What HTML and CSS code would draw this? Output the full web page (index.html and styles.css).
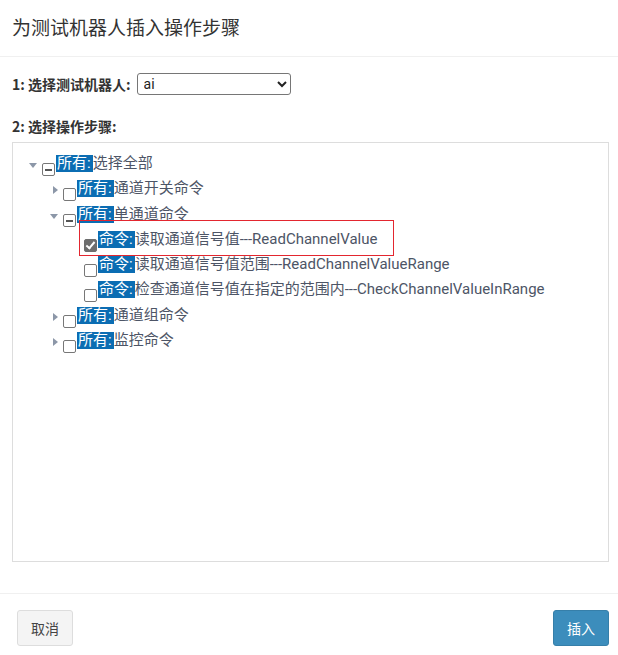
FILE: index.html
```html
<!DOCTYPE html>
<html lang="zh-CN">

<head>
    <meta charset="UTF-8">
    <meta name="viewport" content="width=device-width, initial-scale=1.0">
    <title>为测试机器人插入操作步骤</title>
    <link rel="stylesheet" href="styles.css">
</head>

<body>
    <div class="modal">
        <!-- Header -->
        <div class="modal-header">
            <h4 class="modal-title">为测试机器人插入操作步骤</h4>
        </div>

        <!-- Body -->
        <div class="modal-body">
            <div class="field-row">
                <label for="robot">1: 选择测试机器人:</label>
                <select id="robot" name="robot">
                    <option>ai</option>
                </select>
            </div>

            <div class="field-title">2: 选择操作步骤:</div>

            <div class="tree-box">
                <ul class="tree">
                    <li>
                        <div class="line"><span class="sw down"></span><span class="chk part"></span><span class="tag">所有:</span><span class="txt">选择全部</span></div>
                        <ul>
                            <li>
                                <div class="line"><span class="sw right"></span><span class="chk"></span><span class="tag">所有:</span><span class="txt">通道开关命令</span></div>
                            </li>
                            <li>
                                <div class="line"><span class="sw down"></span><span class="chk part"></span><span class="tag">所有:</span><span class="txt">单通道命令</span></div>
                                <ul>
                                    <li>
                                        <div class="line current"><span class="sw"></span><span class="chk on"></span><span class="tag">命令:</span><span class="txt">读取通道信号值---ReadChannelValue</span></div>
                                    </li>
                                    <li>
                                        <div class="line"><span class="sw"></span><span class="chk"></span><span class="tag">命令:</span><span class="txt">读取通道信号值范围---ReadChannelValueRange</span></div>
                                    </li>
                                    <li>
                                        <div class="line"><span class="sw"></span><span class="chk"></span><span class="tag">命令:</span><span class="txt">检查通道信号值在指定的范围内---CheckChannelValueInRange</span></div>
                                    </li>
                                </ul>
                            </li>
                            <li>
                                <div class="line"><span class="sw right"></span><span class="chk"></span><span class="tag">所有:</span><span class="txt">通道组命令</span></div>
                            </li>
                            <li>
                                <div class="line"><span class="sw right"></span><span class="chk"></span><span class="tag">所有:</span><span class="txt">监控命令</span></div>
                            </li>
                        </ul>
                    </li>
                </ul>
            </div>
        </div>

        <!-- Footer -->
        <div class="modal-footer">
            <button type="button" class="btn btn-default">取消</button>
            <button type="button" class="btn btn-primary">插入</button>
        </div>
    </div>
</body>

</html>
```

FILE: styles.css
```css
/* General Styles */
body {
    margin: 0;
    padding: 0;
    background-color: #fff;
    font-family: Roboto, "Noto Sans CJK SC", sans-serif;
    color: #333;
}

.modal {
    width: 618px;
    height: 655px;
}

/* Header */
.modal-header {
    height: 57px;
    padding: 0 12px 2px;
    box-sizing: border-box;
    display: flex;
    align-items: center;
    border-bottom: 1px solid #f0f0f0;
}

.modal-title {
    margin: 0;
    font-family: "Noto Sans CJK SC", sans-serif;
    font-size: 19px;
    font-weight: 400;
    line-height: 22px;
    color: #333;
}

/* Body */
.modal-body {
    padding: 16px 9px 0 12px;
}

.field-row {
    display: flex;
    align-items: center;
    height: 22px;
}

.field-row label,
.field-title {
    font-family: "Noto Sans CJK SC", sans-serif;
    font-size: 14px;
    font-weight: 700;
    line-height: 20px;
    color: #333;
}

select {
    width: 154px;
    height: 22px;
    margin-left: 6px;
    padding: 0 2px;
    font-family: Roboto, "Noto Sans CJK SC", sans-serif;
    font-size: 14px;
    color: #222;
    background-color: #fff;
    border: 1px solid #767676;
    border-radius: 3px;
}

.field-title {
    margin-top: 21px;
}

/* Tree */
.tree-box {
    margin-top: 6px;
    height: 420px;
    box-sizing: border-box;
    border: 1px solid #ddd;
    padding: 12px 0 0 16px;
}

.tree,
.tree ul {
    list-style: none;
    margin: 0;
    padding: 0;
}

.tree ul {
    padding-left: 21px;
}

.line {
    display: flex;
    align-items: flex-start;
    height: 25.3px;
    font-size: 15px;
    line-height: 17px;
    color: #4d5566;
    white-space: nowrap;
}

.line.current {
    position: relative;
}

.line.current::after {
    content: "";
    position: absolute;
    left: 8px;
    top: -11px;
    width: 313px;
    height: 34px;
    border: 1px solid #e3262f;
}

.sw {
    flex: none;
    width: 13px;
    height: 10px;
}

.sw.down::before {
    content: "";
    display: block;
    margin-top: 8px;
    width: 0;
    height: 0;
    border-left: 4px solid transparent;
    border-right: 4px solid transparent;
    border-top: 5px solid #8c97a8;
}

.sw.right::before {
    content: "";
    display: block;
    margin: 6px 0 0 3px;
    width: 0;
    height: 0;
    border-top: 4px solid transparent;
    border-bottom: 4px solid transparent;
    border-left: 5px solid #8c97a8;
}

.chk {
    flex: none;
    position: relative;
    width: 11px;
    height: 11px;
    margin: 8px 1px 0 0;
    border: 1px solid #777;
    border-radius: 2px;
    background-color: #fff;
}

.chk.part::after {
    content: "";
    position: absolute;
    left: 2px;
    top: 5px;
    width: 7px;
    height: 2px;
    background-color: #555;
}

.chk.on {
    background-color: #6e6e6e;
    border-color: #6e6e6e;
}

.chk.on::after {
    content: "";
    position: absolute;
    left: 3px;
    top: 0;
    width: 3px;
    height: 7px;
    border-right: 2px solid #fff;
    border-bottom: 2px solid #fff;
    transform: rotate(40deg);
}

.tag {
    padding: 0 2px 0 1px;
    background-color: #0b6db3;
    color: #fff;
}

/* Footer */
.modal-footer {
    margin-top: 31px;
    border-top: 1px solid #f0f0f0;
    padding: 16px 9px 0 17px;
    display: flex;
    justify-content: space-between;
}

.btn {
    height: 36px;
    padding: 0 13px;
    font-family: "Noto Sans CJK SC", sans-serif;
    font-size: 14px;
    border-radius: 3px;
    cursor: pointer;
}

.btn-default {
    background-color: #f4f4f4;
    border: 1px solid #ddd;
    color: #444;
}

.btn-primary {
    background-color: #3c8dbc;
    border: 1px solid #367fa9;
    color: #fff;
}
```
